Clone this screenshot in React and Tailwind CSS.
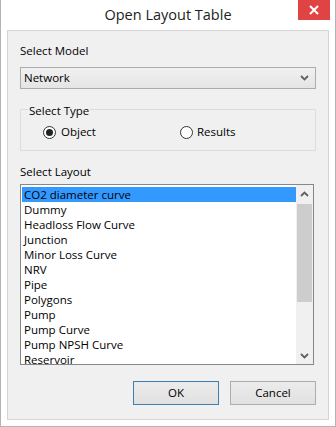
const items = [
  "CO2 diameter curve",
  "Dummy",
  "Headloss Flow Curve",
  "Junction",
  "Minor Loss Curve",
  "NRV",
  "Pipe",
  "Polygons",
  "Pump",
  "Pump Curve",
  "Pump NPSH Curve",
  "Reservoir",
];

function Chevron({ up = false }) {
  return (
    <svg width="9" height="6" viewBox="0 0 9 6" className="block">
      <path
        d={up ? "M1 5 L4.5 1.5 L8 5" : "M1 1 L4.5 4.5 L8 1"}
        fill="none"
        stroke="#606060"
        strokeWidth="1.8"
      />
    </svg>
  );
}

function Radio({ checked }) {
  return (
    <span className="w-[13px] h-[13px] rounded-full border border-[#333333] bg-white flex items-center justify-center shrink-0">
      {checked && <span className="w-[7px] h-[7px] rounded-full bg-[#222222]" />}
    </span>
  );
}

export default function App() {
  return (
    <div className="w-[336px] h-[427px] bg-white border-x border-b border-[#b4b4b4] flex flex-col font-['Open_Sans',sans-serif] text-[11.5px] text-black">
      <div className="h-[30px] relative flex items-center justify-center shrink-0">
        <span className="text-[14.5px] leading-[20px] text-[#222222]">Open Layout Table</span>
        <div className="absolute right-[5px] top-0 w-[32px] h-[20px] bg-[#e04343] flex items-center justify-center">
          <svg width="10" height="10" viewBox="0 0 10 10">
            <path d="M1 1 L9 9 M9 1 L1 9" stroke="white" strokeWidth="2" />
          </svg>
        </div>
      </div>

      <div className="mx-[6px] h-[390px] bg-[#f0f0f0] border border-[#d5d5d5] px-[12px] flex flex-col">
        <div className="mt-[12px] leading-[16px]">Select Model</div>

        <div className="mt-[8px] h-[22px] border border-[#acacac] bg-gradient-to-b from-[#f0f0f0] to-[#e5e5e5] flex items-center justify-between pl-[3px] pr-[6px]">
          <span className="leading-[16px]">Network</span>
          <Chevron />
        </div>

        <div className="mt-[20px] h-[42px] border border-[#dcdcdc] relative">
          <span className="absolute left-[7px] top-[-7px] px-[1px] bg-[#f0f0f0] leading-[16px]">Select Type</span>
          <div className="mt-[14px] h-[16px] flex items-center pl-[22px]">
            <div className="w-[137px] flex items-center gap-[5px]">
              <Radio checked />
              <span className="leading-[16px]">Object</span>
            </div>
            <div className="flex items-center gap-[4px]">
              <Radio />
              <span className="leading-[16px]">Results</span>
            </div>
          </div>
        </div>

        <div className="mt-[13px] leading-[16px]">Select Layout</div>

        <div className="mt-[4px] w-[294px] h-[181px] border border-[#828790] bg-white flex overflow-hidden">
          <div className="flex-1 pl-[1px] pt-[2px] overflow-hidden">
            {items.map((it, i) => (
              <div
                key={it}
                className={
                  i === 0
                    ? "h-[15px] leading-[15px] pl-[2px] bg-[#3399ff] text-black whitespace-nowrap"
                    : "h-[15px] leading-[15px] pl-[2px] whitespace-nowrap"
                }
              >
                {it}
              </div>
            ))}
          </div>
          <div className="w-[17px] bg-[#f0f0f0] flex flex-col">
            <div className="h-[17px] flex items-center justify-center">
              <Chevron up />
            </div>
            <div className="mt-[2px] mx-[1px] h-[98px] bg-[#cdcdcd]" />
            <div className="flex-1" />
            <div className="h-[17px] flex items-center justify-center">
              <Chevron />
            </div>
          </div>
        </div>

        <div className="mt-[16px] flex justify-end gap-[11px]">
          <button className="w-[86px] h-[24px] border border-[#3c7fb1] bg-gradient-to-b from-[#ececec] to-[#e1e1e1] leading-[16px]">
            OK
          </button>
          <button className="w-[86px] h-[24px] border border-[#adadad] bg-gradient-to-b from-[#ececec] to-[#e1e1e1] leading-[16px]">
            Cancel
          </button>
        </div>
      </div>
    </div>
  );
}
